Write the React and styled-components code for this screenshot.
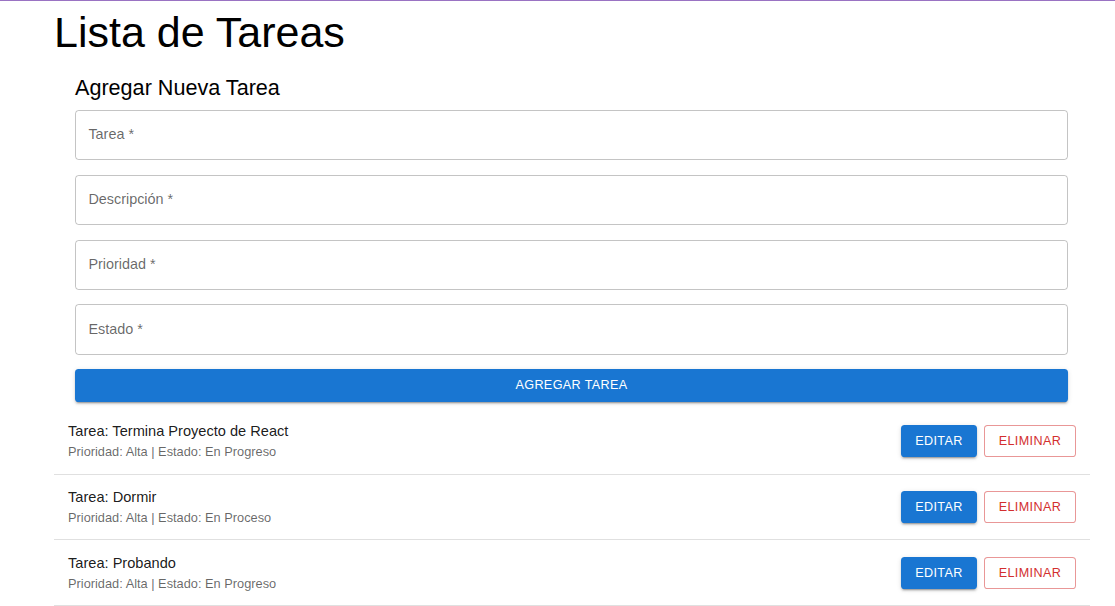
import React from 'react';
import styled, { createGlobalStyle } from 'styled-components';

const tasks = [
  { name: 'Termina Proyecto de React', priority: 'Alta', status: 'En Progreso' },
  { name: 'Dormir', priority: 'Alta', status: 'En Proceso' },
  { name: 'Probando', priority: 'Alta', status: 'En Progreso' },
];

const fields = ['Tarea', 'Descripción', 'Prioridad', 'Estado'];

const App = () => (
  <>
    <GlobalStyle />
    <Page>
      <Title>Lista de Tareas</Title>

      <FormBox>
        <Subtitle>Agregar Nueva Tarea</Subtitle>
        {fields.map((f) => (
          <Field key={f}>
            <span>{f} *</span>
          </Field>
        ))}
        <SubmitButton>Agregar Tarea</SubmitButton>
      </FormBox>

      <TaskList>
        {tasks.map((t) => (
          <TaskItem key={t.name}>
            <TaskText>
              <p className='primary'>Tarea: {t.name}</p>
              <p className='secondary'>
                Prioridad: {t.priority} | Estado: {t.status}
              </p>
            </TaskText>
            <Actions>
              <ActionButton>Editar</ActionButton>
              <ActionButton $outlined>Eliminar</ActionButton>
            </Actions>
          </TaskItem>
        ))}
      </TaskList>
    </Page>
  </>
);

const GlobalStyle = createGlobalStyle`
  html, body {
    margin: 0;
    background: #fff;
  }

  body {
    border-top: 1px solid #9a73c3;
    font-family: 'Liberation Sans', Arial, sans-serif;
  }
`;

const Page = styled.div`
  width: 1036px;
  margin-left: 54px;
  display: flex;
  flex-direction: column;
`;

const Title = styled.h1`
  margin: 0;
  padding-top: 6.4px;
  font-size: 43px;
  line-height: 1.167;
  font-weight: 400;
  color: #000;
`;

const FormBox = styled.div`
  padding: 16.5px 22px 0 21px;
  display: flex;
  flex-direction: column;
  gap: 14.4px;
`;

const Subtitle = styled.h2`
  margin: 0 0 -7.2px;
  font-size: 21.6px;
  line-height: 1.334;
  font-weight: 400;
  color: #000;
`;

const Field = styled.div`
  height: 50.4px;
  box-sizing: border-box;
  border: 1px solid rgba(0, 0, 0, 0.23);
  border-radius: 3.6px;
  display: flex;
  align-items: center;
  padding: 0 12.4px;

  span {
    font-size: 14.4px;
    color: rgba(0, 0, 0, 0.6);
    margin-top: -2px;
  }
`;

const SubmitButton = styled.button`
  height: 32.4px;
  border: none;
  border-radius: 3.6px;
  background: #1976d2;
  color: #fff;
  font-family: inherit;
  font-size: 12.6px;
  letter-spacing: 0.36px;
  text-transform: uppercase;
  box-shadow: 0px 3px 1px -2px rgba(0, 0, 0, 0.2), 0px 2px 2px 0px rgba(0, 0, 0, 0.14),
    0px 1px 5px 0px rgba(0, 0, 0, 0.12);
  padding: 0;
`;

const TaskList = styled.ul`
  list-style: none;
  margin: 0;
  padding: 7.2px 0 0;
`;

const TaskItem = styled.li`
  display: flex;
  align-items: center;
  justify-content: space-between;
  padding: 7.2px 14.4px 7.2px 14px;
  border-bottom: 1px solid rgba(0, 0, 0, 0.12);
`;

const TaskText = styled.div`
  margin: 5.4px 0;

  p {
    margin: 0;
  }

  .primary {
    font-size: 14.6px;
    line-height: 1.48;
    color: rgba(0, 0, 0, 0.9);
  }

  .secondary {
    font-size: 12.8px;
    line-height: 1.41;
    color: rgba(0, 0, 0, 0.6);
  }
`;

const Actions = styled.div`
  display: flex;
  gap: 7.2px;
`;

const ActionButton = styled.button`
  height: 32.4px;
  box-sizing: border-box;
  padding: 0 ${(p) => (p.$outlined ? '13.5px' : '14.4px')};
  border-radius: 3.6px;
  font-family: inherit;
  font-size: 12.6px;
  letter-spacing: 0.36px;
  text-transform: uppercase;
  background: ${(p) => (p.$outlined ? '#fff' : '#1976d2')};
  color: ${(p) => (p.$outlined ? '#d32f2f' : '#fff')};
  border: ${(p) => (p.$outlined ? '1px solid rgba(211, 47, 47, 0.5)' : 'none')};
  box-shadow: ${(p) =>
    p.$outlined
      ? 'none'
      : '0px 3px 1px -2px rgba(0, 0, 0, 0.2), 0px 2px 2px 0px rgba(0, 0, 0, 0.14), 0px 1px 5px 0px rgba(0, 0, 0, 0.12)'};
`;

export default App;
